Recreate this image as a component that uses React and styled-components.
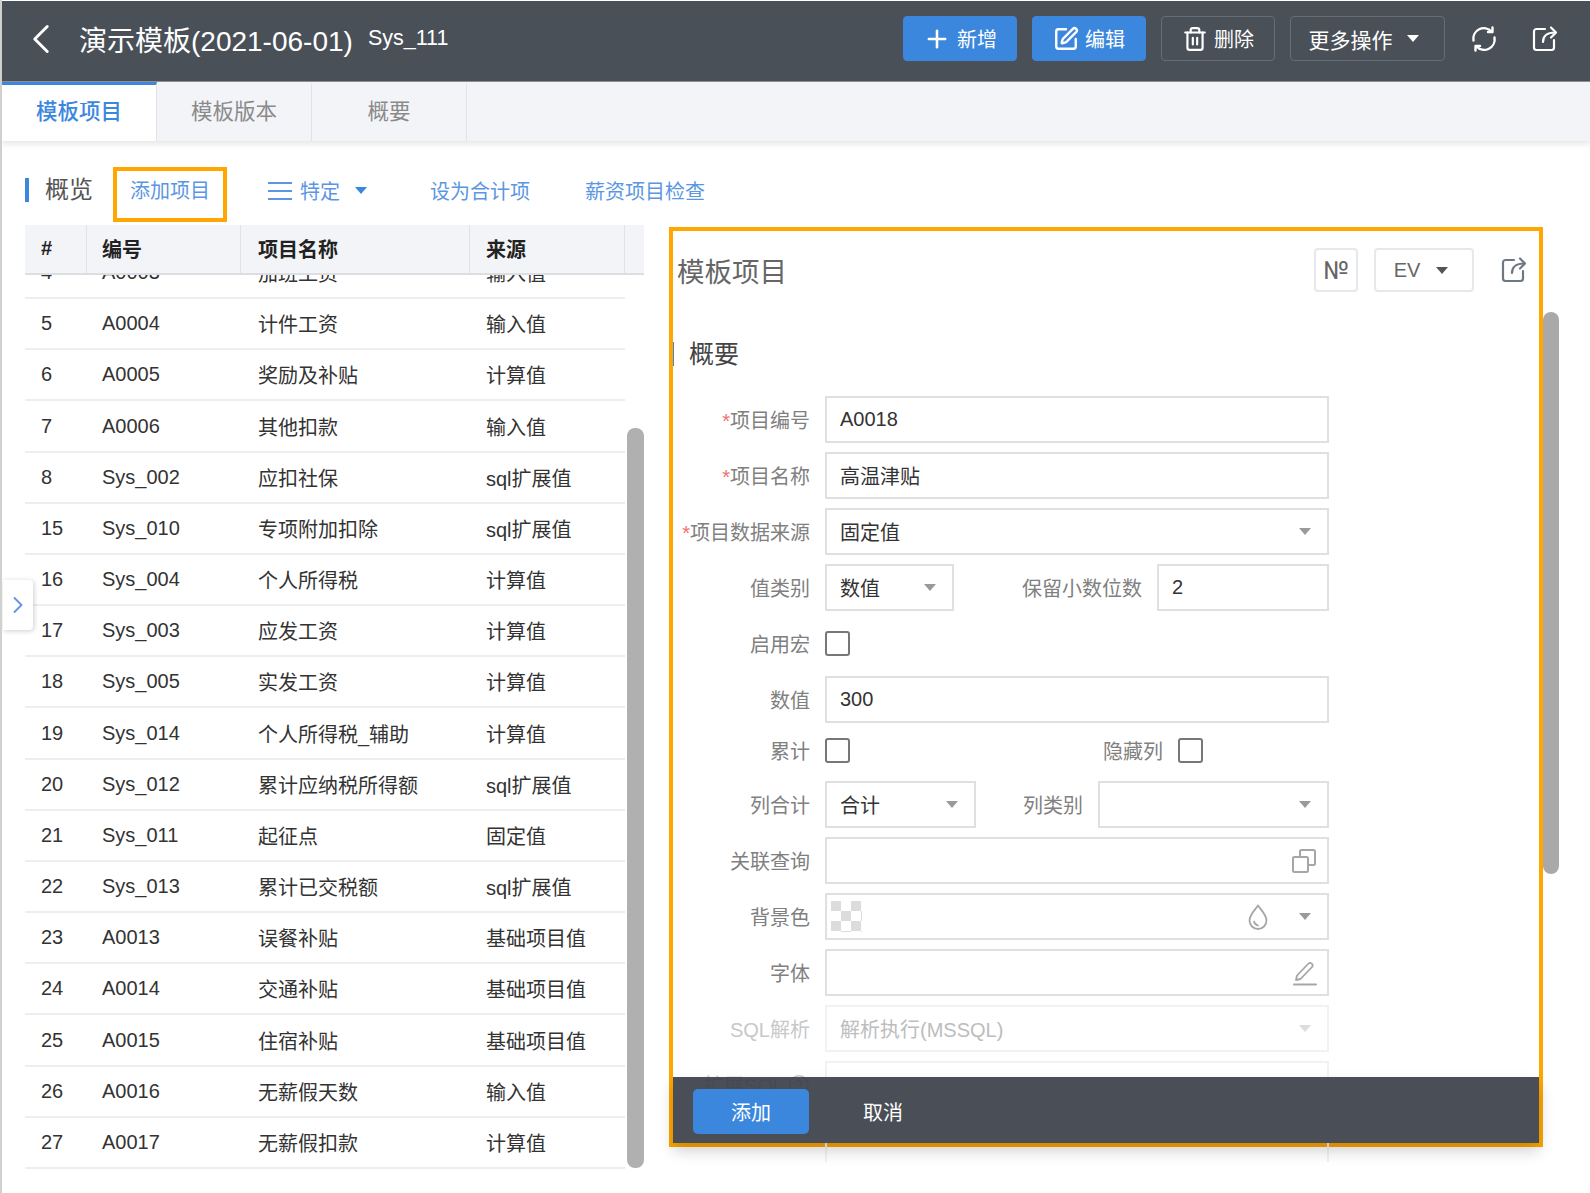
import React from 'react';
import styled, { createGlobalStyle } from 'styled-components';
import { ChevronLeft, ChevronRight, CircleHelp, Plus, SquarePen, Trash2 } from 'lucide-react';

const GlobalStyle = createGlobalStyle`
  html, body { margin: 0; padding: 0; background: #fff; }
  * { box-sizing: border-box; }
  body {
    font-family: "Liberation Sans", "Noto Sans CJK SC", sans-serif;
    font-size: 20px;
    color: #333;
  }
`;

const BLUE = '#3c87de';
const DARK = '#4a5058';
const ORANGE = '#ffa600';

const Page = styled.div`
  width: 1590px;
  height: 1193px;
  overflow: hidden;
  padding-top: 1px;
  border-left: 2px solid #d0d0d0;
  display: flex;
  flex-direction: column;
`;

const Header = styled.header`
  height: 81px;
  flex: none;
  background: ${DARK};
  border-bottom: 1px solid #8d9196;
  color: #fff;
  display: flex;
  align-items: center;
  padding: 0 31px 5px 14px;
`;

const Title = styled.h1`
  margin: 0 0 0 13px;
  font-size: 28px;
  font-weight: 400;
`;

const Code = styled.span`
  margin-left: 15px;
  font-size: 21.5px;
`;

const HeaderActions = styled.div`
  margin-left: auto;
  display: flex;
  align-items: center;
  gap: 15px;
`;

const ActionButton = styled.button`
  height: 45px;
  width: ${p => p.$w}px;
  display: flex;
  align-items: center;
  justify-content: center;
  gap: 6px;
  border-radius: 4px;
  border: 1.5px solid ${p => (p.$primary ? BLUE : '#666d75')};
  background: ${p => (p.$primary ? BLUE : 'transparent')};
  color: #fff;
  font: inherit;
  font-size: ${p => p.$fs || 20}px;
  padding: 0 ${p => p.$pr || 0}px 0 0;
`;

const HeaderIcon = styled.span`
  display: flex;
  margin-left: ${p => p.$ml || 0}px;
`;

const Caret = styled.i`
  display: inline-block;
  width: 0;
  height: 0;
  border-left: ${p => p.$size || 6}px solid transparent;
  border-right: ${p => p.$size || 6}px solid transparent;
  border-top: ${p => (p.$size || 6) + 1}px solid ${p => p.$color || '#9a9a9a'};
  margin-left: ${p => p.$ml || 0}px;
  flex: none;
`;

const Tabs = styled.nav`
  height: 59px;
  flex: none;
  background: #f2f4f8;
  display: flex;
  box-shadow: 0 3px 6px rgba(0, 0, 0, 0.1);
  position: relative;
  z-index: 1;
`;

const Tab = styled.div`
  width: 155px;
  display: flex;
  align-items: center;
  justify-content: center;
  padding-bottom: 7px;
  font-size: 21.5px;
  border-top: 3px solid ${p => (p.$active ? BLUE : 'transparent')};
  border-right: 1px solid #e1e3e8;
  background: ${p => (p.$active ? '#fff' : 'transparent')};
  color: ${p => (p.$active ? BLUE : '#8a8a8a')};
  font-weight: ${p => (p.$active ? 500 : 400)};
`;

const Main = styled.main`
  flex: 1;
  position: relative;
  display: flex;
  align-items: flex-start;
  padding: 26px 0 0 23px;
  gap: 25px;
`;

const SideToggle = styled.div`
  position: absolute;
  left: 1px;
  top: 439px;
  width: 30px;
  height: 50px;
  background: #fff;
  border-radius: 0 4px 4px 0;
  box-shadow: 1px 1px 5px rgba(0, 0, 0, 0.2);
  color: #6a8fe6;
  display: flex;
  align-items: center;
  justify-content: center;
  z-index: 2;
`;

const LeftColumn = styled.section`
  width: 619px;
  flex: none;
`;

const Toolbar = styled.div`
  height: 55px;
  display: flex;
  align-items: flex-start;
  margin-bottom: 3px;
  white-space: nowrap;
`;

const Overview = styled.div`
  width: 88px;
  height: 24px;
  flex: none;
  margin-top: 11px;
  border-left: 4px solid ${BLUE};
  padding-left: 16px;
  font-size: 24px;
  line-height: 24px;
  color: #555;
`;

const ToolLink = styled.div`
  display: flex;
  flex: none;
  align-items: center;
  height: ${p => (p.$marked ? 55 : 47)}px;
  color: #5b96e2;
  margin-left: ${p => p.$ml || 0}px;
  ${p => p.$marked && `
    width: 114px;
    justify-content: center;
    padding-bottom: 11px;
    border: 4px solid ${ORANGE};
  `}
`;

const MenuLines = styled.svg`
  width: 24px;
  height: 20px;
  margin-right: 8px;
`;

const COLUMNS = '62px 154px 229px 155px 19px';

const TableWrap = styled.div`
  position: relative;
`;

const TableHead = styled.div`
  height: 50px;
  display: grid;
  grid-template-columns: ${COLUMNS};
  background: #f2f4f8;
  border-bottom: 2px solid #dcdee2;
  font-weight: 700;
  color: #222;
`;

const HeadCell = styled.div`
  display: flex;
  align-items: center;
  padding: 0 0 2px ${p => p.$pl}px;
  border-right: 1px solid #e0e2e6;
  &:last-child { border-right: 0; }
`;

const TableBody = styled.div`
  height: 897px;
  width: 600px;
  padding-bottom: 3px;
  overflow: hidden;
  display: flex;
  flex-direction: column;
  justify-content: flex-end;
`;

const Row = styled.div`
  flex: none;
  height: 51.18px;
  display: grid;
  grid-template-columns: 62px 154px 229px 155px;
  align-items: center;
  border-bottom: 2px solid #eeeeee;
`;

const Cell = styled.div`
  padding-left: ${p => p.$pl}px;
  white-space: nowrap;
`;

const TableScroll = styled.div`
  position: absolute;
  right: 0;
  top: 203px;
  width: 17px;
  height: 740px;
  background: #b0b0b0;
  border-radius: 8px;
`;

const Panel = styled.section`
  position: relative;
  width: 874px;
  height: 920px;
  flex: none;
  margin-top: 60px;
  border: 4px solid ${ORANGE};
  padding-top: 17px;
`;

const PanelScroll = styled.div`
  position: absolute;
  right: -20px;
  top: 81px;
  width: 16px;
  height: 562px;
  background: #a9a9a9;
  border-radius: 8px;
`;

const PanelHead = styled.div`
  height: 44px;
  display: flex;
  align-items: center;
  padding: 0 11px 0 4px;
`;

const PanelTitle = styled.h2`
  margin: 0 auto 0 0;
  font-size: 27.5px;
  font-weight: 400;
  color: #666;
`;

const GhostButton = styled.button`
  width: ${p => p.$w}px;
  height: 44px;
  margin-right: ${p => p.$mr || 0}px;
  display: flex;
  align-items: center;
  justify-content: center;
  background: #fff;
  border: 2px solid #e6e8ec;
  border-radius: 4px;
  color: #666;
  font: inherit;
  padding: 0 ${p => p.$pr || 0}px 0 0;
`;

const NumberMark = styled.span`
  font-family: Roboto, sans-serif;
  font-size: 25px;
`;

const SectionTitle = styled.h3`
  margin: 50px 0 30px;
  height: 24px;
  border-left: 1px solid ${BLUE};
  padding-left: 15px;
  font-size: 25px;
  line-height: 24px;
  font-weight: 400;
  color: #444;
`;

const Form = styled.div`
  width: 656px;
  display: flex;
  flex-direction: column;
  gap: 9px;
`;

const FormRow = styled.div`
  height: ${p => p.$h || 47}px;
  display: flex;
  align-items: center;
  gap: 15px;
`;

const LiftedRow = styled(FormRow)`
  margin: -2px 0 2px;
`;

const TallRow = styled(FormRow)`
  align-items: flex-start;
`;

const Label = styled.div`
  width: ${p => p.$w || 137}px;
  height: ${p => (p.$top ? '47px' : 'auto')};
  flex: none;
  display: flex;
  align-items: center;
  justify-content: flex-end;
  gap: 4px;
  color: ${p => (p.$off ? '#c8c8c8' : '#808080')};
  white-space: nowrap;
`;

const Star = styled.span`
  color: #f07070;
`;

const Field = styled.div`
  width: ${p => (p.$w ? `${p.$w}px` : 'auto')};
  flex: ${p => (p.$w ? 'none' : 1)};
  height: ${p => p.$h || 47}px;
  display: flex;
  align-items: center;
  gap: 22px;
  padding: 0 16px 0 13px;
  border: 2px solid ${p => (p.$off ? '#f2f2f2' : '#e0e0e0')};
  color: ${p => (p.$off ? '#bdbdbd' : '#333')};
  background: #fff;
`;

const OpenField = styled(Field)`
  border-bottom: 0;
  background: transparent;
`;

const FieldText = styled.span`
  flex: 1;
`;

const IconSlot = styled.span`
  display: flex;
  color: #a6a6a6;
  margin-right: ${p => p.$mr || 0}px;
`;

const Check = styled.span`
  width: 25px;
  height: 25px;
  flex: none;
  border: 2px solid #777;
  border-radius: 3px;
  background: #fff;
`;

const Checker = styled.span`
  width: 31px;
  height: 31px;
  margin-left: -9px;
  background-color: #fff;
  background-image: conic-gradient(#dcdcdc 25%, transparent 0 50%, #dcdcdc 0 75%, transparent 0);
  background-size: 20px 20px;
  background-position: 10px 0;
`;

const PanelFooter = styled.div`
  position: absolute;
  left: 0;
  right: 0;
  bottom: 0;
  height: 66px;
  padding: 3px 0 0 20px;
  display: flex;
  align-items: center;
  background: rgba(54, 60, 69, 0.9);
  box-shadow: 0 8px 14px rgba(0, 0, 0, 0.18);
  color: #fff;
`;

const SubmitButton = styled.button`
  width: 116px;
  height: 45px;
  border: 0;
  border-radius: 5px;
  background: ${BLUE};
  color: #fff;
  font: inherit;
`;

const CancelText = styled.span`
  margin-left: 54px;
`;

const rows = [
  [4, 'A0003', '加班工资', '输入值'],
  [5, 'A0004', '计件工资', '输入值'],
  [6, 'A0005', '奖励及补贴', '计算值'],
  [7, 'A0006', '其他扣款', '输入值'],
  [8, 'Sys_002', '应扣社保', 'sql扩展值'],
  [15, 'Sys_010', '专项附加扣除', 'sql扩展值'],
  [16, 'Sys_004', '个人所得税', '计算值'],
  [17, 'Sys_003', '应发工资', '计算值'],
  [18, 'Sys_005', '实发工资', '计算值'],
  [19, 'Sys_014', '个人所得税_辅助', '计算值'],
  [20, 'Sys_012', '累计应纳税所得额', 'sql扩展值'],
  [21, 'Sys_011', '起征点', '固定值'],
  [22, 'Sys_013', '累计已交税额', 'sql扩展值'],
  [23, 'A0013', '误餐补贴', '基础项目值'],
  [24, 'A0014', '交通补贴', '基础项目值'],
  [25, 'A0015', '住宿补贴', '基础项目值'],
  [26, 'A0016', '无薪假天数', '输入值'],
  [27, 'A0017', '无薪假扣款', '计算值'],
];

const ShareIcon = ({ size = 28, color = 'currentColor' }) => (
  <svg width={size} height={size} viewBox="0 0 28 28" fill="none" stroke={color} strokeWidth="2.2" strokeLinecap="round" strokeLinejoin="round">
    <path d="M14 4H5.500A2.500 2.500 0 0 0 3 6.500v16A2.500 2.500 0 0 0 5.500 25h15a2.500 2.500 0 0 0 2.500-2.500V15" />
    <path d="M12 17c0-6 4-9.500 12-9.500" />
    <path d="M20 2.500l5 5-5 5" />
  </svg>
);

const SyncIcon = () => (
  <svg width="28" height="28" viewBox="0 0 28 28" fill="none" stroke="#fff" strokeWidth="2.4" strokeLinecap="round" strokeLinejoin="round">
    <path d="M3.500 15.500A10.500 10.500 0 0 1 21.500 6.500" />
    <path d="M24.500 12.500A10.500 10.500 0 0 1 6.500 21.500" />
    <path d="M22.500 2.500v4.500H18" />
    <path d="M5.500 25.500V21H10" />
  </svg>
);

const DropIcon = () => (
  <svg width="22" height="28" viewBox="0 0 22 28" fill="none" stroke="currentColor" strokeWidth="1.8" strokeLinecap="round" strokeLinejoin="round">
    <path d="M11 2.500c3.500 5 8.500 9.500 8.500 15a8.500 8.500 0 0 1-17 0c0-5.500 5-10 8.500-15z" />
    <path d="M7 18.500c.5 2 2 3.500 4 4" />
  </svg>
);

const LinkedCopyIcon = () => (
  <svg width="26" height="26" viewBox="0 0 26 26" fill="none" stroke="currentColor" strokeWidth="2" strokeLinejoin="round">
    <rect x="2" y="9" width="15" height="15" rx="1.500" />
    <path d="M9 9V3.500A1.500 1.500 0 0 1 10.500 2h12A1.500 1.500 0 0 1 24 3.500v12a1.500 1.500 0 0 1-1.500 1.500H17" />
  </svg>
);

const FontPenIcon = () => (
  <svg width="26" height="26" viewBox="0 0 26 26" fill="none" stroke="currentColor" strokeWidth="1.8" strokeLinecap="round" strokeLinejoin="round">
    <path d="M5 15.500L16.500 3.500a2 2 0 0 1 3 0l.5.500a2 2 0 0 1 0 3L8.500 19 4 20z" />
    <path d="M2 24.500h22" strokeWidth="2" />
  </svg>
);

const Selected = ({ children }) => (
  <Field>
    <FieldText>{children}</FieldText>
    <Caret />
  </Field>
);

export default function App() {
  return (
    <>
      <GlobalStyle />
      <Page>
        <Header>
          <ChevronLeft size={50} strokeWidth={1.4} />
          <Title>演示模板(2021-06-01)</Title>
          <Code>Sys_111</Code>
          <HeaderActions>
            <ActionButton $primary $w={114}><Plus size={28} strokeWidth={2.2} />新增</ActionButton>
            <ActionButton $primary $w={114}><SquarePen size={26} strokeWidth={2.2} />编辑</ActionButton>
            <ActionButton $w={114}><Trash2 size={26} strokeWidth={2} />删除</ActionButton>
            <ActionButton $w={155} $fs={21} $pr={8}>更多操作<Caret $color="#fff" $ml={8} /></ActionButton>
            <HeaderIcon $ml={10}><SyncIcon /></HeaderIcon>
            <HeaderIcon $ml={18}><ShareIcon color="#fff" /></HeaderIcon>
          </HeaderActions>
        </Header>

        <Tabs>
          <Tab $active>模板项目</Tab>
          <Tab>模板版本</Tab>
          <Tab>概要</Tab>
        </Tabs>

        <Main>
          <SideToggle><ChevronRight size={28} strokeWidth={1.6} /></SideToggle>
          <LeftColumn>
            <Toolbar>
              <Overview>概览</Overview>
              <ToolLink $marked>添加项目</ToolLink>
              <ToolLink $ml={41}>
                <MenuLines viewBox="0 0 24 20" fill="none" stroke="#5b96e2" strokeWidth="2">
                  <path d="M0 2h24M0 10h24M0 18h24" />
                </MenuLines>
                特定
                <Caret $color={BLUE} $ml={15} />
              </ToolLink>
              <ToolLink $ml={63}>设为合计项</ToolLink>
              <ToolLink $ml={55}>薪资项目检查</ToolLink>
            </Toolbar>
            <TableWrap>
              <TableHead>
                <HeadCell $pl={16}>#</HeadCell>
                <HeadCell $pl={15}>编号</HeadCell>
                <HeadCell $pl={17}>项目名称</HeadCell>
                <HeadCell $pl={16}>来源</HeadCell>
                <HeadCell />
              </TableHead>
              <TableBody>
                {rows.map(r => (
                  <Row key={r[0]}>
                    <Cell $pl={16}>{r[0]}</Cell>
                    <Cell $pl={15}>{r[1]}</Cell>
                    <Cell $pl={17}>{r[2]}</Cell>
                    <Cell $pl={16}>{r[3]}</Cell>
                  </Row>
                ))}
              </TableBody>
              <TableScroll />
            </TableWrap>
          </LeftColumn>

          <Panel>
            <PanelScroll />
            <PanelHead>
              <PanelTitle>模板项目</PanelTitle>
              <GhostButton $w={44} $mr={16}><NumberMark>№</NumberMark></GhostButton>
              <GhostButton $w={100} $mr={26} $pr={6}>EV<Caret $color="#555" $ml={16} /></GhostButton>
              <IconSlot><ShareIcon color="#6f7782" /></IconSlot>
            </PanelHead>
            <SectionTitle>概要</SectionTitle>
            <Form>
              <FormRow>
                <Label><span><Star>*</Star>项目编号</span></Label>
                <Field>A0018</Field>
              </FormRow>
              <FormRow>
                <Label><span><Star>*</Star>项目名称</span></Label>
                <Field>高温津贴</Field>
              </FormRow>
              <FormRow>
                <Label><span><Star>*</Star>项目数据来源</span></Label>
                <Selected>固定值</Selected>
              </FormRow>
              <FormRow>
                <Label>值类别</Label>
                <Field $w={129}><FieldText>数值</FieldText><Caret /></Field>
                <Label $w={173}>保留小数位数</Label>
                <Field>2</Field>
              </FormRow>
              <FormRow>
                <Label>启用宏</Label>
                <Check />
              </FormRow>
              <FormRow>
                <Label>数值</Label>
                <Field>300</Field>
              </FormRow>
              <LiftedRow $h={40}>
                <Label>累计</Label>
                <Check />
                <Label $w={298}>隐藏列</Label>
                <Check />
              </LiftedRow>
              <FormRow>
                <Label>列合计</Label>
                <Field $w={151}><FieldText>合计</FieldText><Caret /></Field>
                <Label $w={92}>列类别</Label>
                <Selected />
              </FormRow>
              <FormRow>
                <Label>关联查询</Label>
                <Field>
                  <FieldText />
                  <IconSlot $mr={-6}><LinkedCopyIcon /></IconSlot>
                </Field>
              </FormRow>
              <FormRow>
                <Label>背景色</Label>
                <Field>
                  <Checker />
                  <FieldText />
                  <IconSlot $mr={8}><DropIcon /></IconSlot>
                  <Caret />
                </Field>
              </FormRow>
              <FormRow>
                <Label>字体</Label>
                <Field>
                  <FieldText />
                  <IconSlot $mr={-7}><FontPenIcon /></IconSlot>
                </Field>
              </FormRow>
              <FormRow>
                <Label $off>SQL解析</Label>
                <Field $off>
                  <FieldText>解析执行(MSSQL)</FieldText>
                  <Caret $color="#dddddd" />
                </Field>
              </FormRow>
              <TallRow>
                <Label $off $top>扩展SQL<CircleHelp size={22} strokeWidth={1.6} /></Label>
                <OpenField $off $h={101} />
              </TallRow>
            </Form>
            <PanelFooter>
              <SubmitButton>添加</SubmitButton>
              <CancelText>取消</CancelText>
            </PanelFooter>
          </Panel>
        </Main>
      </Page>
    </>
  );
}
